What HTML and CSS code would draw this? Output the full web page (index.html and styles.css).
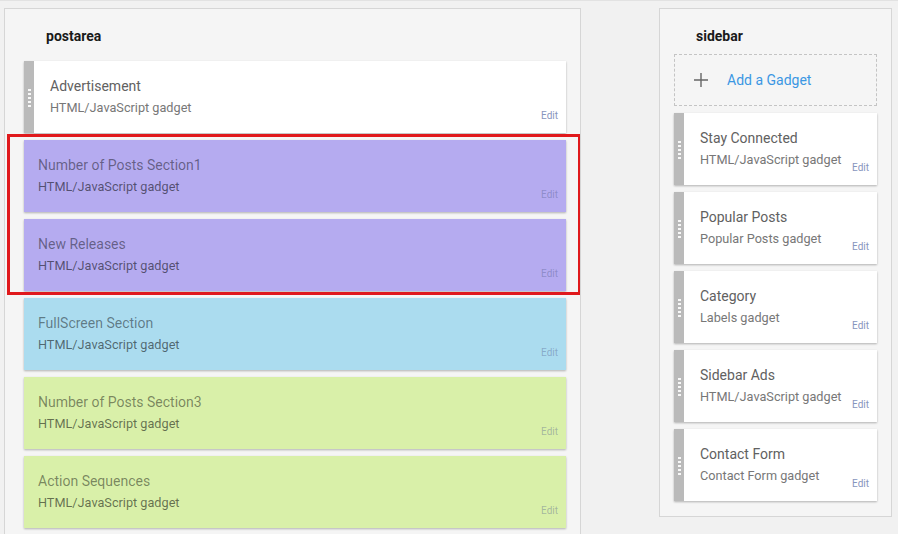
FILE: index.html
```html
<!DOCTYPE html>
<html>
<head>
<meta charset="utf-8">
<link rel="stylesheet" href="styles.css">
</head>
<body>
<div class="layout">
  <section class="panel postarea">
    <h2 class="panel-title">postarea</h2>
    <div class="list main-list">
      <div class="gadget">
        <div class="handle"><span class="grip"></span></div>
        <div class="body">
          <div class="info"><div class="title">Advertisement</div><div class="type">HTML/JavaScript gadget</div></div>
          <span class="edit">Edit</span>
        </div>
      </div>
      <div class="highlight">
        <div class="gadget colored purple">
          <div class="body">
            <div class="info"><div class="title">Number of Posts Section1</div><div class="type">HTML/JavaScript gadget</div></div>
            <span class="edit">Edit</span>
          </div>
        </div>
        <div class="gadget colored purple">
          <div class="body">
            <div class="info"><div class="title">New Releases</div><div class="type">HTML/JavaScript gadget</div></div>
            <span class="edit">Edit</span>
          </div>
        </div>
      </div>
      <div class="gadget colored blue">
        <div class="body">
          <div class="info"><div class="title">FullScreen Section</div><div class="type">HTML/JavaScript gadget</div></div>
          <span class="edit">Edit</span>
        </div>
      </div>
      <div class="gadget colored green">
        <div class="body">
          <div class="info"><div class="title">Number of Posts Section3</div><div class="type">HTML/JavaScript gadget</div></div>
          <span class="edit">Edit</span>
        </div>
      </div>
      <div class="gadget colored green">
        <div class="body">
          <div class="info"><div class="title">Action Sequences</div><div class="type">HTML/JavaScript gadget</div></div>
          <span class="edit">Edit</span>
        </div>
      </div>
    </div>
  </section>

  <section class="panel sidebar">
    <h2 class="panel-title">sidebar</h2>
    <div class="add-gadget">
      <svg class="plus" width="14" height="14" viewBox="0 0 14 14"><path d="M7 0V14M0 7H14" stroke="#666" stroke-width="1.4" fill="none"/></svg>
      <span class="add-text">Add a Gadget</span>
    </div>
    <div class="list side-list">
      <div class="gadget">
        <div class="handle"><span class="grip"></span></div>
        <div class="body">
          <div class="info"><div class="title">Stay Connected</div><div class="type">HTML/JavaScript gadget</div></div>
          <span class="edit">Edit</span>
        </div>
      </div>
      <div class="gadget">
        <div class="handle"><span class="grip"></span></div>
        <div class="body">
          <div class="info"><div class="title">Popular Posts</div><div class="type">Popular Posts gadget</div></div>
          <span class="edit">Edit</span>
        </div>
      </div>
      <div class="gadget">
        <div class="handle"><span class="grip"></span></div>
        <div class="body">
          <div class="info"><div class="title">Category</div><div class="type">Labels gadget</div></div>
          <span class="edit">Edit</span>
        </div>
      </div>
      <div class="gadget">
        <div class="handle"><span class="grip"></span></div>
        <div class="body">
          <div class="info"><div class="title">Sidebar Ads</div><div class="type">HTML/JavaScript gadget</div></div>
          <span class="edit">Edit</span>
        </div>
      </div>
      <div class="gadget">
        <div class="handle"><span class="grip"></span></div>
        <div class="body">
          <div class="info"><div class="title">Contact Form</div><div class="type">Contact Form gadget</div></div>
          <span class="edit">Edit</span>
        </div>
      </div>
    </div>
  </section>
</div>
</body>
</html>
```

FILE: styles.css
```css
html, body {
  margin: 0;
  padding: 0;
  background: #f1f1f1;
  height: 100%;
  overflow: hidden;
}
body {
  font-family: Roboto, "Liberation Sans", Arial, sans-serif;
  border-top: 1px solid #e2e2e2;
  box-sizing: border-box;
}
.layout {
  display: flex;
  align-items: flex-start;
  padding-top: 7px;
}
.panel {
  background: #f5f5f5;
  border: 1px solid #d6d6d6;
  box-sizing: border-box;
  padding: 17px 14px 14px 14px;
}
.postarea {
  margin-left: 4px;
  width: 577px;
  padding-left: 19px;
  height: 526px;
  border-bottom: none;
  overflow: hidden;
}
.sidebar {
  margin-left: 78px;
  width: 233px;
  height: 509px;
}
.panel-title {
  margin: 0;
  padding-left: 22px;
  font-size: 14px;
  line-height: 20px;
  font-weight: 700;
  color: #1a1a1a;
}
.list {
  display: flex;
  flex-direction: column;
  gap: 7px;
}
.main-list { margin-top: 15px; }
.side-list { margin-top: 7px; }
.highlight {
  position: relative;
  display: flex;
  flex-direction: column;
  gap: 7px;
}
.highlight::after {
  content: "";
  position: absolute;
  top: -6px;
  left: -17px;
  right: -15px;
  bottom: -4px;
  border: 3px solid #e0191c;
  pointer-events: none;
}
.add-gadget {
  margin-top: 8px;
  height: 52px;
  box-sizing: border-box;
  border: 1px dashed #c4c4c4;
  display: flex;
  align-items: center;
  padding-left: 19px;
}
.plus { display: block; }
.add-text {
  margin-left: 19px;
  font-size: 14px;
  color: #3b97e3;
}
.gadget {
  display: flex;
  height: 72px;
  flex: none;
  box-shadow: 0 1px 2px rgba(0,0,0,0.28);
  background: #fff;
}
.handle {
  width: 10px;
  flex: none;
  background: #bababa;
  display: flex;
  align-items: center;
  justify-content: center;
}
.grip {
  width: 3px;
  height: 18px;
  margin-top: 1px;
  background: repeating-linear-gradient(to bottom, rgba(255,255,255,0.9) 0 2px, transparent 2px 4px);
}
.body {
  flex: 1;
  display: flex;
  align-items: flex-end;
  padding: 15px 8px 11px 16px;
  min-width: 0;
}
.info {
  flex: 1;
  align-self: flex-start;
  min-width: 0;
}
.title {
  font-size: 14px;
  line-height: 20px;
  color: #616161;
  white-space: nowrap;
}
.type {
  margin-top: 4px;
  font-size: 12.7px;
  line-height: 16px;
  color: #777;
  white-space: nowrap;
}
.edit {
  font-size: 10px;
  line-height: 12px;
  color: #8795bd;
  flex: none;
}
.colored .body { padding-left: 14px; }
.colored .title { color: rgba(0,0,0,0.45); }
.colored .type { color: rgba(0,0,0,0.55); }
.colored .edit { color: rgba(80,90,140,0.4); }
.purple { background: #b5abf0; }
.blue { background: #abdcef; }
.green { background: #d9f0a9; }
```
